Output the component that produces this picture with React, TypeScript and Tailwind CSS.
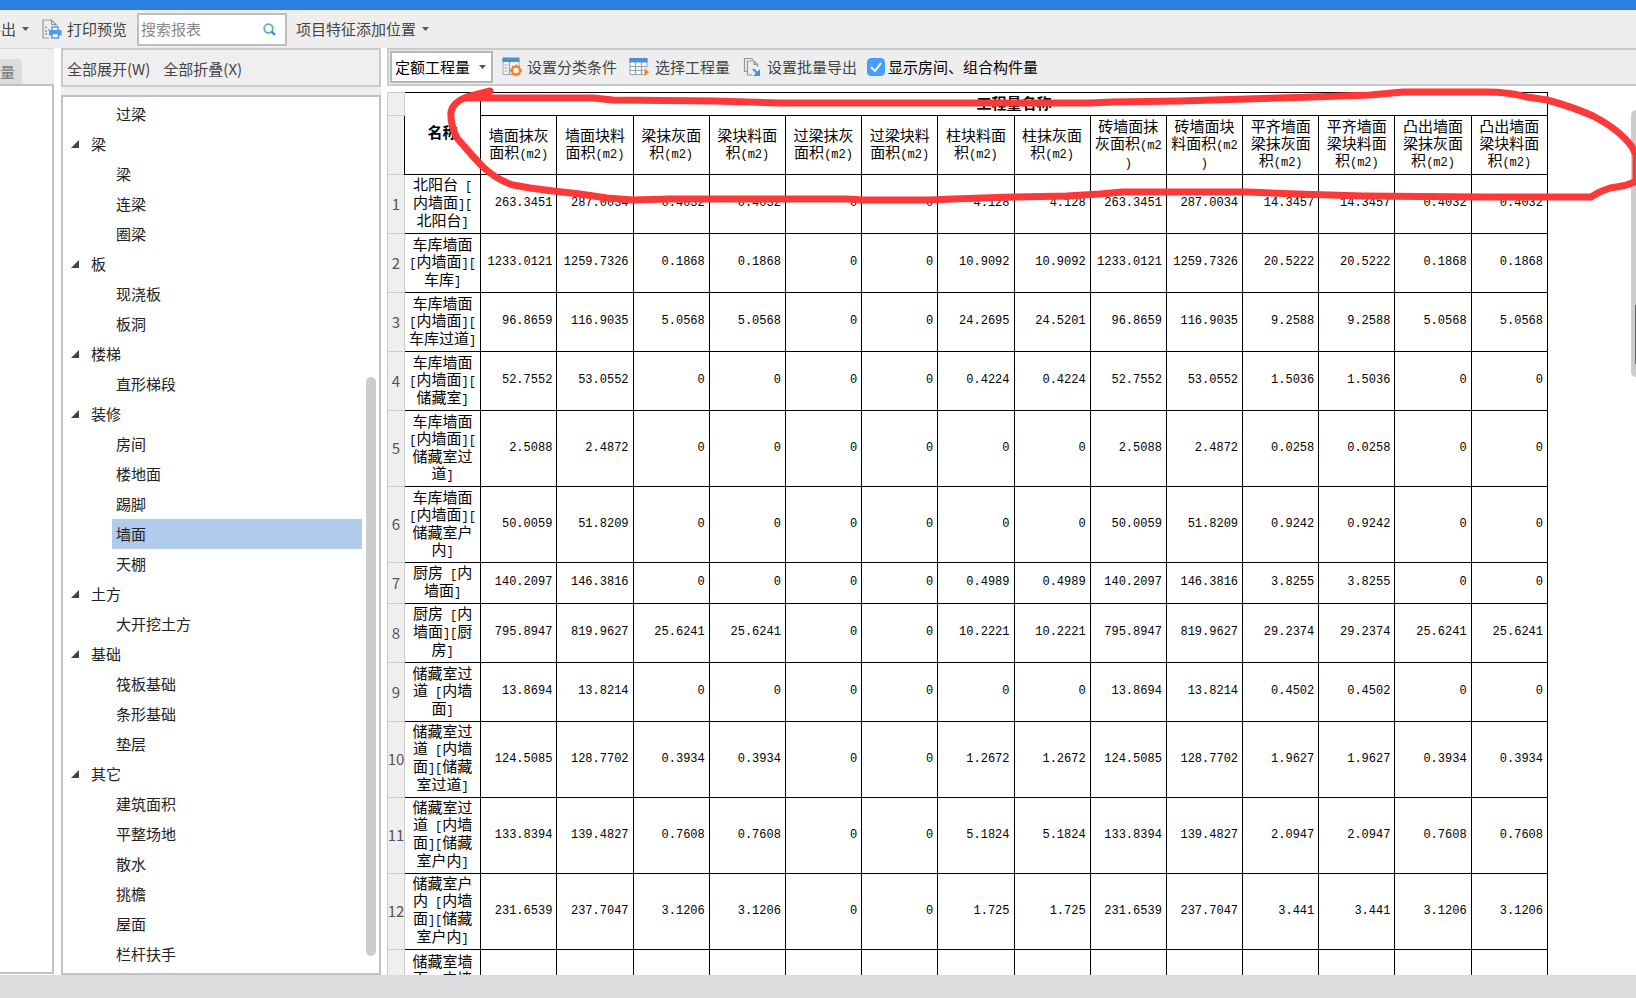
import { useState } from 'react'

const COLUMNS = [
  '墙面抹灰\n面积(m2)', '墙面块料\n面积(m2)', '梁抹灰面\n积(m2)', '梁块料面\n积(m2)',
  '过梁抹灰\n面积(m2)', '过梁块料\n面积(m2)', '柱块料面\n积(m2)', '柱抹灰面\n积(m2)',
  '砖墙面抹\n灰面积(m2\n)', '砖墙面块\n料面积(m2\n)', '平齐墙面\n梁抹灰面\n积(m2)', '平齐墙面\n梁块料面\n积(m2)',
  '凸出墙面\n梁抹灰面\n积(m2)', '凸出墙面\n梁块料面\n积(m2)',
]

type Row = { name: string; values: string[] }

const ROWS: Row[] = [
  { name: '北阳台 [\n内墙面][\n北阳台]', values: ['263.3451', '287.0034', '0.4032', '0.4032', '0', '0', '4.128', '4.128', '263.3451', '287.0034', '14.3457', '14.3457', '0.4032', '0.4032'] },
  { name: '车库墙面\n[内墙面][\n车库]', values: ['1233.0121', '1259.7326', '0.1868', '0.1868', '0', '0', '10.9092', '10.9092', '1233.0121', '1259.7326', '20.5222', '20.5222', '0.1868', '0.1868'] },
  { name: '车库墙面\n[内墙面][\n车库过道]', values: ['96.8659', '116.9035', '5.0568', '5.0568', '0', '0', '24.2695', '24.5201', '96.8659', '116.9035', '9.2588', '9.2588', '5.0568', '5.0568'] },
  { name: '车库墙面\n[内墙面][\n储藏室]', values: ['52.7552', '53.0552', '0', '0', '0', '0', '0.4224', '0.4224', '52.7552', '53.0552', '1.5036', '1.5036', '0', '0'] },
  { name: '车库墙面\n[内墙面][\n储藏室过\n道]', values: ['2.5088', '2.4872', '0', '0', '0', '0', '0', '0', '2.5088', '2.4872', '0.0258', '0.0258', '0', '0'] },
  { name: '车库墙面\n[内墙面][\n储藏室户\n内]', values: ['50.0059', '51.8209', '0', '0', '0', '0', '0', '0', '50.0059', '51.8209', '0.9242', '0.9242', '0', '0'] },
  { name: '厨房 [内\n墙面]', values: ['140.2097', '146.3816', '0', '0', '0', '0', '0.4989', '0.4989', '140.2097', '146.3816', '3.8255', '3.8255', '0', '0'] },
  { name: '厨房 [内\n墙面][厨\n房]', values: ['795.8947', '819.9627', '25.6241', '25.6241', '0', '0', '10.2221', '10.2221', '795.8947', '819.9627', '29.2374', '29.2374', '25.6241', '25.6241'] },
  { name: '储藏室过\n道 [内墙\n面]', values: ['13.8694', '13.8214', '0', '0', '0', '0', '0', '0', '13.8694', '13.8214', '0.4502', '0.4502', '0', '0'] },
  { name: '储藏室过\n道 [内墙\n面][储藏\n室过道]', values: ['124.5085', '128.7702', '0.3934', '0.3934', '0', '0', '1.2672', '1.2672', '124.5085', '128.7702', '1.9627', '1.9627', '0.3934', '0.3934'] },
  { name: '储藏室过\n道 [内墙\n面][储藏\n室户内]', values: ['133.8394', '139.4827', '0.7608', '0.7608', '0', '0', '5.1824', '5.1824', '133.8394', '139.4827', '2.0947', '2.0947', '0.7608', '0.7608'] },
  { name: '储藏室户\n内 [内墙\n面][储藏\n室户内]', values: ['231.6539', '237.7047', '3.1206', '3.1206', '0', '0', '1.725', '1.725', '231.6539', '237.7047', '3.441', '3.441', '3.1206', '3.1206'] },
]

const ROW_HEIGHT: Record<number, string> = { 2: 'h-[41px]', 3: 'h-[59px]', 4: 'h-[76px]' }

const TREE = [
  { items: ['过梁'] },
  { group: '梁', items: ['梁', '连梁', '圈梁'] },
  { group: '板', items: ['现浇板', '板洞'] },
  { group: '楼梯', items: ['直形梯段'] },
  { group: '装修', items: ['房间', '楼地面', '踢脚', '墙面', '天棚'] },
  { group: '土方', items: ['大开挖土方'] },
  { group: '基础', items: ['筏板基础', '条形基础', '垫层'] },
  { group: '其它', items: ['建筑面积', '平整场地', '散水', '挑檐', '屋面', '栏杆扶手'] },
]

// half-width characters are set in a narrower mono face than the Chinese text
function MixedText({ text }: { text: string }) {
  return (
    <span className="block whitespace-pre">
      {text.split(/([ -~]+)/).map((part, i) =>
        i % 2 ? <span key={i} className="text-[12px] leading-none font-['Liberation_Mono',monospace]">{part}</span> : part
      )}
    </span>
  )
}

function Caret() {
  return (
    <svg width="7" height="4" viewBox="0 0 7 4" className="shrink-0">
      <path d="M0 0h7L3.500 4z" fill="#555" />
    </svg>
  )
}

function SearchIcon() {
  return (
    <svg width="13" height="13" viewBox="0 0 13 13" fill="none" className="shrink-0">
      <circle cx="5.500" cy="5.500" r="4.300" stroke="#5aa9d3" strokeWidth="1.800" />
      <path d="M8.500 8.500l3.500 3.500" stroke="#3f8fc4" strokeWidth="2.400" />
    </svg>
  )
}

function PrintIcon() {
  return (
    <svg width="20" height="20" viewBox="0 0 20 20" fill="none">
      <path d="M7 19H1V1h8.500L14 5.500V7M9.500 1v4.500H14" stroke="#8a9ba3" strokeWidth="1.200" />
      <path d="M3 8.500h2M3 12h2M3 15h2M6 10.500h1" stroke="#8a9ba3" strokeWidth="1.500" />
      <path d="M10 12V8h6v4" fill="#fff" stroke="#5599ea" strokeWidth="1.500" />
      <path d="M7 11h12.500v5.500H7z" fill="#5599ea" />
      <path d="M10 14.500h6.500v4.500H10z" fill="#fff" stroke="#5599ea" strokeWidth="1.500" />
    </svg>
  )
}

function ClassifyIcon() {
  return (
    <svg width="20" height="20" viewBox="0 0 20 20" fill="none">
      <path d="M1 1.500h16v16H1z" fill="#f5f7f9" stroke="#9aabb5" />
      <path d="M.500 .500h17v4.500H.500z" fill="#4a8fdd" />
      <path d="M7.500 5v13M2.500 8h3M2.500 11h3M2.500 14h3" stroke="#8fa2ae" strokeWidth="1.200" />
      <path d="M14 7l1.600 2 2.400-.400.400 2.400L20.500 13.500 18.400 16l-.400 2.400-2.400-.400L14 20l-1.600-2-2.400.400-.400-2.400-2.100-2.500L9.600 11l.400-2.400 2.400.400z" fill="#f5832d" />
      <circle cx="14" cy="13.500" r="2.700" fill="#fff" />
    </svg>
  )
}

function GridIcon() {
  return (
    <svg width="20" height="20" viewBox="0 0 20 20" fill="none">
      <path d="M1 2h17v15.500H1z" fill="#fff" stroke="#8fa2ae" />
      <path d="M.500 1h18v4.500H.500z" fill="#4a8fdd" />
      <path d="M1 9.500h17M1 13.500h17M6.500 5.500v12M12.500 5.500v12" stroke="#8fa2ae" strokeWidth="1.200" />
      <path d="M14.500 10.500h5.500v9h-5.500z" fill="#eee" />
      <path d="M15.500 11l4.500 4.200-4.500 4.300z" fill="#f5832d" />
    </svg>
  )
}

function ExportIcon() {
  return (
    <svg width="18" height="20" viewBox="0 0 18 20" fill="none">
      <path d="M4 14.500H1.500v-13h7L10 3" stroke="#8a9ba3" strokeWidth="1.200" />
      <path d="M9 18H4.500V4H11l3.500 3.500V10M11 4v3.500h3.500" stroke="#8a9ba3" strokeWidth="1.200" />
      <path d="M10 12l5.500 5.500" stroke="#4a8fdd" strokeWidth="2" />
      <path d="M17 12v7h-7z" fill="#4a8fdd" />
    </svg>
  )
}

function RedMarker() {
  return (
    <svg viewBox="0 0 1636 998" preserveAspectRatio="none" className="pointer-events-none absolute inset-0 h-full w-full">
      <path
        d="M490 91L467 97Q453 102 451 112Q450 124 457 138L470 153L483 167Q497 180 513 185L530 188L553 191L580 194L607 198L633 200L670 199L847 199L863 200L930 200L953 199L1013 197L1067 196L1100 194L1123 192L1247 192L1297 194L1363 196L1480 197L1591 197Q1600 191 1610 188Q1628 186 1636 181V155L1632 147Q1620 130 1593 116Q1573 107 1547 100L1527 97Q1508 92 1488 92H1403L1370 95L1313 97L1180 101L1113 102L1090 103H780L713 101L613 100L593 98H467"
        fill="none" stroke="#fc3838" strokeWidth="7" strokeLinecap="round" strokeLinejoin="round"
      />
    </svg>
  )
}

export default function App() {
  const [selected, setSelected] = useState('墙面')
  const [showRooms, setShowRooms] = useState(true)

  return (
    <div className="relative flex h-screen flex-col overflow-hidden bg-[#dcdcdf] font-['Noto_Sans_CJK_SC',sans-serif] text-[15px] leading-5 text-[#444]">
      <div className="h-[10px] shrink-0 bg-[#2b7fe0]" />

      {/* Toolbar */}
      <div className="flex h-[38px] shrink-0 items-center bg-[#eee]">
        <button className="flex w-[42px] items-center gap-[6px]">
          <span className="flex w-4 justify-end overflow-hidden whitespace-nowrap">导出</span>
          <Caret />
        </button>
        <button className="flex items-center gap-[5px]">
          <PrintIcon />
          打印预览
        </button>
        <label className="ml-[10px] flex h-[33px] w-[150px] items-center border-2 border-[#bbbec1] bg-white pr-[9px] pl-[2px]">
          <input type="text" aria-label="搜索报表" placeholder="搜索报表" className="min-w-0 flex-1 outline-none placeholder:text-[#888]" />
          <SearchIcon />
        </label>
        <button className="ml-[9px] flex items-center gap-[6px]">
          项目特征添加位置
          <Caret />
        </button>
      </div>

      <div className="flex min-h-0 flex-1 bg-white">
        {/* Left edge panel */}
        <div className="mb-px flex w-[54px] shrink-0 flex-col border-t border-[#d5d7d9] bg-[#efefef]">
          <div className="flex h-[35px] items-end">
            <button className="h-[25px] w-[22px] rounded-tr-sm bg-[#dcdcdc] text-left text-[#777]">量</button>
          </div>
          <div className="flex-1 border-t-2 border-r-2 border-b-2 border-[#bfc3c7] bg-white" />
        </div>

        {/* Component tree */}
        <div className="ml-[7px] flex w-[320px] shrink-0 flex-col bg-[#efefef]">
          <div className="flex h-[39px] shrink-0 items-center gap-[13px] border-2 border-[#c8cbce] px-1 pt-[2px]">
            <button>全部展开(W)</button>
            <button>全部折叠(X)</button>
          </div>
          <div className="mt-2 flex min-h-0 flex-1 justify-between border-2 border-[#bfc3c7] bg-white pt-[2px] text-[#222]">
            <ul className="w-[299px]">
              {TREE.map((node, n) => (
                <li key={n}>
                  {node.group && (
                    <button className="flex h-[30px] items-center gap-3 pl-2">
                      <svg width="8" height="8" viewBox="0 0 8 8"><path d="M8 0v8H0z" fill="#444" /></svg>
                      {node.group}
                    </button>
                  )}
                  <ul className="pl-[49px]">
                    {node.items.map((item) => (
                      <li key={item}>
                        <button onClick={() => setSelected(item)}
                          className={`block h-[30px] w-full pl-1 text-left ${selected === item ? 'bg-[#b1cbec]' : ''}`}>
                          {item}
                        </button>
                      </li>
                    ))}
                  </ul>
                </li>
              ))}
            </ul>
            <div className="mt-[278px] mr-[3px] mb-[17px] w-[10px] rounded-full bg-[#ccc]" />
          </div>
        </div>

        {/* Report */}
        <div className="ml-[6px] flex min-w-0 flex-1 flex-col">
          <div className="flex h-[38px] shrink-0 items-center border-y-2 border-l-2 border-[#c8cbce] bg-[#eee] pl-px whitespace-nowrap">
            <div className="relative flex h-8 w-[103px] items-center border-2 border-[#b5b8bb] bg-white">
              <select aria-label="工程量类型" className="h-full w-full appearance-none pl-[3px] text-black outline-none">
                <option>定额工程量</option>
              </select>
              <span className="pointer-events-none absolute right-[5px]"><Caret /></span>
            </div>
            <button className="ml-[9px] flex items-center gap-[5px]"><ClassifyIcon />设置分类条件</button>
            <button className="ml-3 flex items-center gap-[6px]"><GridIcon />选择工程量</button>
            <button className="ml-[13px] flex items-center gap-[6px]"><ExportIcon />设置批量导出</button>
            <label className="ml-[10px] flex items-center gap-[3px] text-black">
              <span className="relative flex h-[18px] w-[18px]">
                <input type="checkbox" checked={showRooms} onChange={(e) => setShowRooms(e.target.checked)}
                  className="h-[18px] w-[18px] appearance-none rounded-sm border border-[#4a9df8] checked:bg-[#4a9df8]" />
                {showRooms && (
                  <svg viewBox="0 0 18 18" className="pointer-events-none absolute inset-0" fill="none">
                    <path d="M4 9l4 4 6-8" stroke="#fff" strokeWidth="2" />
                  </svg>
                )}
              </span>
              显示房间、组合构件量
            </label>
          </div>

          <div className="flex min-h-0 flex-1 items-start overflow-hidden pt-[6px]">
            <div className="min-w-0 flex-1">
              <table className="w-full table-fixed border-collapse leading-[17px] text-black">
                <colgroup>
                  <col className="w-[17px]" />
                  <col span={15} />
                </colgroup>
                <thead>
                  <tr className="h-[23px]">
                    <th className="border border-[#ccc] bg-[#efefef]" />
                    <th rowSpan={2} className="border border-black p-0 pb-1 font-bold">名称</th>
                    <th colSpan={14} className="border border-black p-0 pb-1 font-bold">工程量名称</th>
                  </tr>
                  <tr className="h-[59px]">
                    <th className="border border-[#ccc] bg-[#efefef]" />
                    {COLUMNS.map((c) => (
                      <th key={c} className="border border-black p-0 pb-1 font-normal"><MixedText text={c} /></th>
                    ))}
                  </tr>
                </thead>
                <tbody>
                  {ROWS.map((row, i) => (
                    <tr key={i} className={ROW_HEIGHT[row.name.split('\n').length]}>
                      <th className="border border-[#ccc] bg-[#efefef] p-0 pb-[2px] font-normal text-[#555]">
                        <span className="flex justify-center">{i + 1}</span>
                      </th>
                      <td className="border border-black p-0 pb-1 text-center"><MixedText text={row.name} /></td>
                      {row.values.map((v, j) => (
                        <td key={j} className="border border-black py-0 pr-1 pb-px pl-0 text-right font-['Liberation_Mono',monospace] text-[12px]">{v}</td>
                      ))}
                    </tr>
                  ))}
                  <tr className="h-[76px]">
                    <th className="border border-[#ccc] bg-[#efefef]" />
                    <td className="border border-black p-0 pt-[2px] text-center align-top"><MixedText text={'储藏室墙\n面 [内墙'} /></td>
                    {COLUMNS.map((c) => <td key={c} className="border border-black" />)}
                  </tr>
                </tbody>
              </table>
            </div>
            <div className="mt-[18px] ml-[83px] flex h-[267px] w-[5px] justify-end rounded-l-full bg-[#ccc]">
              <div className="mt-[195px] h-[59px] w-px bg-[#666]" />
            </div>
          </div>
        </div>
      </div>

      <div className="h-[23px] shrink-0" />
      <RedMarker />
    </div>
  )
}
